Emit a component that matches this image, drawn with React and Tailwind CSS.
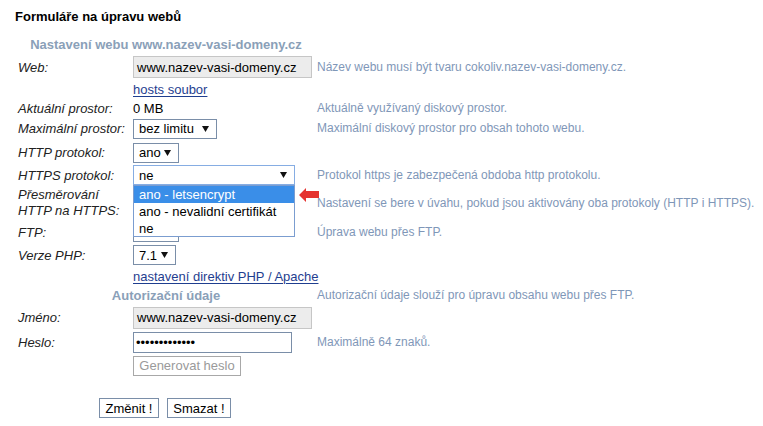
import React from "react";

const help = "text-[12px] text-[#7f97b8] whitespace-nowrap";

function Caret() {
  return (
    <svg width="7" height="6" viewBox="0 0 7 6" className="shrink-0">
      <polygon points="0,0 7,0 3.5,6" fill="#111" />
    </svg>
  );
}

function FakeSelect({ value, className = "", focused = false, children }) {
  return (
    <div
      className={
        "relative flex h-[20px] items-center justify-between bg-white pl-[5px] pr-[7px] text-black border " +
        (focused ? "border-[#86ade3] " : "border-[#7a8ea8] ") +
        className
      }
    >
      <span>{value}</span>
      <Caret />
      {children}
    </div>
  );
}

function Row({ h, label, labelClass = "", mid, helpText }) {
  return (
    <div className={"flex items-center " + h}>
      <div className={"w-[118px] shrink-0 pl-[3px] italic text-[#222] " + labelClass}>{label}</div>
      <div className="w-[184px] shrink-0 flex items-center">{mid}</div>
      {helpText ? <div className={help}>{helpText}</div> : null}
    </div>
  );
}

export default function App() {
  return (
    <div className="relative w-[763px] h-[426px] overflow-hidden bg-white font-['Liberation_Sans',Arial,sans-serif] text-[13px] leading-[15px] text-[#222]">
      <div className="flex h-[32px] items-center pl-[15px] font-bold text-black">Formuláře na úpravu webů</div>

      <div className="pl-[15px]">
        <div className="flex h-[24px] items-center">
          <div className="w-[302px] text-center font-bold text-[#8aa0b8]">Nastavení webu www.nazev-vasi-domeny.cz</div>
        </div>

        <Row
          h="h-[22px]"
          label="Web:"
          mid={
            <div className="flex h-[22px] w-[179px] items-center border border-[#c6c6c6] bg-[#ececec] pl-[3px] text-black">
              www.nazev-vasi-domeny.cz
            </div>
          }
          helpText="Název webu musí být tvaru cokoliv.nazev-vasi-domeny.cz."
        />

        <Row
          h="h-[22px]"
          label=""
          mid={<a className="text-[#1f3e8f] underline underline-offset-2">hosts soubor</a>}
        />

        <Row h="h-[16px]" label="Aktuální prostor:" mid={<span className="text-black">0 MB</span>} helpText="Aktuálně využívaný diskový prostor." />

        <Row
          h="h-[25px]"
          label="Maximální prostor:"
          mid={<FakeSelect value="bez limitu" className="w-[84px]" />}
          helpText="Maximální diskový prostor pro obsah tohoto webu."
        />

        <Row h="h-[23px]" label="HTTP protokol:" mid={<FakeSelect value="ano" className="w-[46px]" />} />

        <Row
          h="h-[22px]"
          label="HTTPS protokol:"
          mid={
            <FakeSelect value="ne" className="w-[162px]" focused>
              <div className="absolute left-[-1px] top-[19px] z-10 w-[162px] border border-[#7b9dd0] bg-white text-black">
                <div className="flex h-[17px] items-center bg-[#3a8ee8] pl-[5px] text-white">ano - letsencrypt</div>
                <div className="flex h-[17px] items-center pl-[5px]">ano - nevalidní certifikát</div>
                <div className="flex h-[16px] items-center pl-[5px]">ne</div>
              </div>
            </FakeSelect>
          }
          helpText="Protokol https je zabezpečená obdoba http protokolu."
        />

        <Row
          h="h-[34px]"
          labelClass="leading-[16px]"
          label={
            <>
              Přesměrování
              <br />
              HTTP na HTTPS:
            </>
          }
          mid={<FakeSelect value="ano" className="w-[46px]" />}
          helpText="Nastavení se bere v úvahu, pokud jsou aktivovány oba protokoly (HTTP i HTTPS)."
        />

        <Row h="h-[24px]" label="FTP:" mid={<FakeSelect value="ano" className="w-[46px]" />} helpText="Úprava webu přes FTP." />

        <Row h="h-[22px]" label="Verze PHP:" mid={<FakeSelect value="7.1" className="w-[43px]" />} />

        <Row
          h="h-[20px]"
          label=""
          mid={<a className="whitespace-nowrap text-[#1f3e8f] underline underline-offset-2">nastavení direktiv PHP / Apache</a>}
        />

        <div className="flex h-[19px] items-center">
          <div className="w-[302px] text-center font-bold text-[#8aa0b8]">Autorizační údaje</div>
          <div className={help}>Autorizační údaje slouží pro úpravu obsahu webu přes FTP.</div>
        </div>

        <Row
          h="h-[25px]"
          label="Jméno:"
          mid={
            <div className="flex h-[22px] w-[179px] items-center border border-[#c6c6c6] bg-[#ececec] pl-[3px] text-black">
              www.nazev-vasi-domeny.cz
            </div>
          }
        />

        <Row
          h="h-[24px]"
          label="Heslo:"
          mid={
            <div className="flex h-[21px] w-[159px] items-center border border-[#7a8ea8] bg-white pl-[2px] text-black">
              •••••••••••••
            </div>
          }
          helpText="Maximálně 64 znaků."
        />

        <Row
          h="h-[23px]"
          label=""
          mid={
            <div className="flex h-[20px] w-[108px] items-center justify-center border border-[#a8a8a8] bg-white text-[#9a9a9a]">
              Generovat heslo
            </div>
          }
        />
      </div>

      <div className="mt-[21px] flex gap-[8px] pl-[99px]">
        <div className="flex h-[20px] w-[60px] items-center justify-center border border-[#7a8ea8] bg-white text-black">Změnit !</div>
        <div className="flex h-[20px] w-[64px] items-center justify-center border border-[#7a8ea8] bg-white text-black">Smazat !</div>
      </div>

      <svg className="absolute left-[299px] top-[188px]" width="20" height="14" viewBox="0 0 20 14">
        <polygon points="0,7 7,0 7,3 20,3 20,10 7,10 7,14" fill="#e5322f" />
      </svg>
    </div>
  );
}
